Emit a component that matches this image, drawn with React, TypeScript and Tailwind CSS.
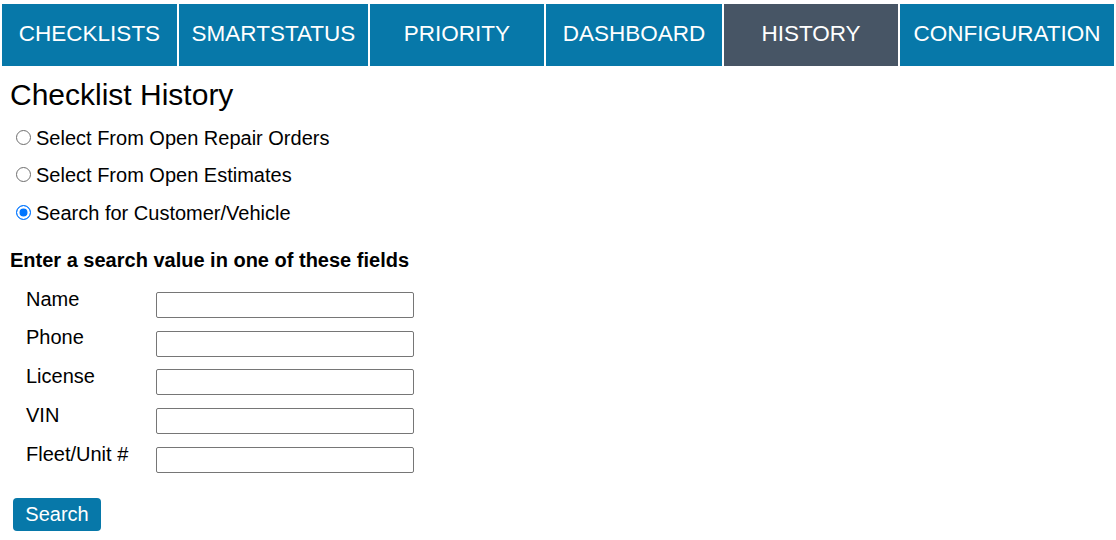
const tabs = [
  { label: 'CHECKLISTS', width: 'w-[175px]' },
  { label: 'SMARTSTATUS', width: 'w-[189px]' },
  { label: 'PRIORITY', width: 'w-[174px]' },
  { label: 'DASHBOARD', width: 'w-[176px]' },
  { label: 'HISTORY', width: 'w-[174px]', active: true },
  { label: 'CONFIGURATION', width: 'w-[214px]' }
]

const modes = [
  { label: 'Select From Open Repair Orders', checked: false },
  { label: 'Select From Open Estimates', checked: false },
  { label: 'Search for Customer/Vehicle', checked: true }
]

const fields = ['Name', 'Phone', 'License', 'VIN', 'Fleet/Unit #']

const App = () => {
  return (
    <div className="w-full min-h-screen bg-white text-black font-['Liberation_Sans',Arial,sans-serif]">
      <nav className="flex ml-[2px] mt-[4px] gap-[2px] h-[62px]">
        {tabs.map((tab) => (
          <div
            key={tab.label}
            className={`${tab.width} ${
              tab.active ? 'bg-[#475565]' : 'bg-[#0778a9]'
            } flex items-center justify-center pb-[3px] text-[22.5px] text-white cursor-pointer`}
          >
            {tab.label}
          </div>
        ))}
      </nav>

      <div className="px-[10px]">
        <h1 className="mt-[12px] text-[30px] leading-[34px] font-normal">Checklist History</h1>

        <div className="mt-[14.5px] flex flex-col gap-[14.5px]">
          {modes.map((mode) => (
            <label key={mode.label} className="flex items-start h-[23px] text-[20px] leading-[23px]">
              <input
                type="radio"
                name="mode"
                defaultChecked={mode.checked}
                className="appearance-none shrink-0 ml-[6px] mr-[5px] mt-[3px] w-[15px] h-[15px] rounded-full border border-[#6e6e6e] bg-white checked:border-[#0075ff] checked:bg-[#0075ff] checked:shadow-[inset_0_0_0_2.5px_white]"
              />
              <span>{mode.label}</span>
            </label>
          ))}
        </div>

        <h4 className="mt-[24px] text-[20px] leading-[23px] font-bold">
          Enter a search value in one of these fields
        </h4>

        <div className="mt-[16px] flex flex-col">
          {fields.map((field) => (
            <div key={field} className="flex items-start h-[38.75px]">
              <span className="pl-[16px] w-[146px] text-[20px] leading-[23px]">{field}</span>
              <input
                type="text"
                className="mt-[4.4px] w-[258px] h-[26px] border border-[#767676] rounded-[2px] bg-white px-1 text-[16px]"
              />
            </div>
          ))}
        </div>

        <button
          type="button"
          className="mt-[16.5px] ml-[3px] w-[88px] h-[33px] rounded-[4px] bg-[#0778a9] text-white text-[20px] leading-[23px] cursor-pointer"
        >
          Search
        </button>
      </div>
    </div>
  )
}

export default App
